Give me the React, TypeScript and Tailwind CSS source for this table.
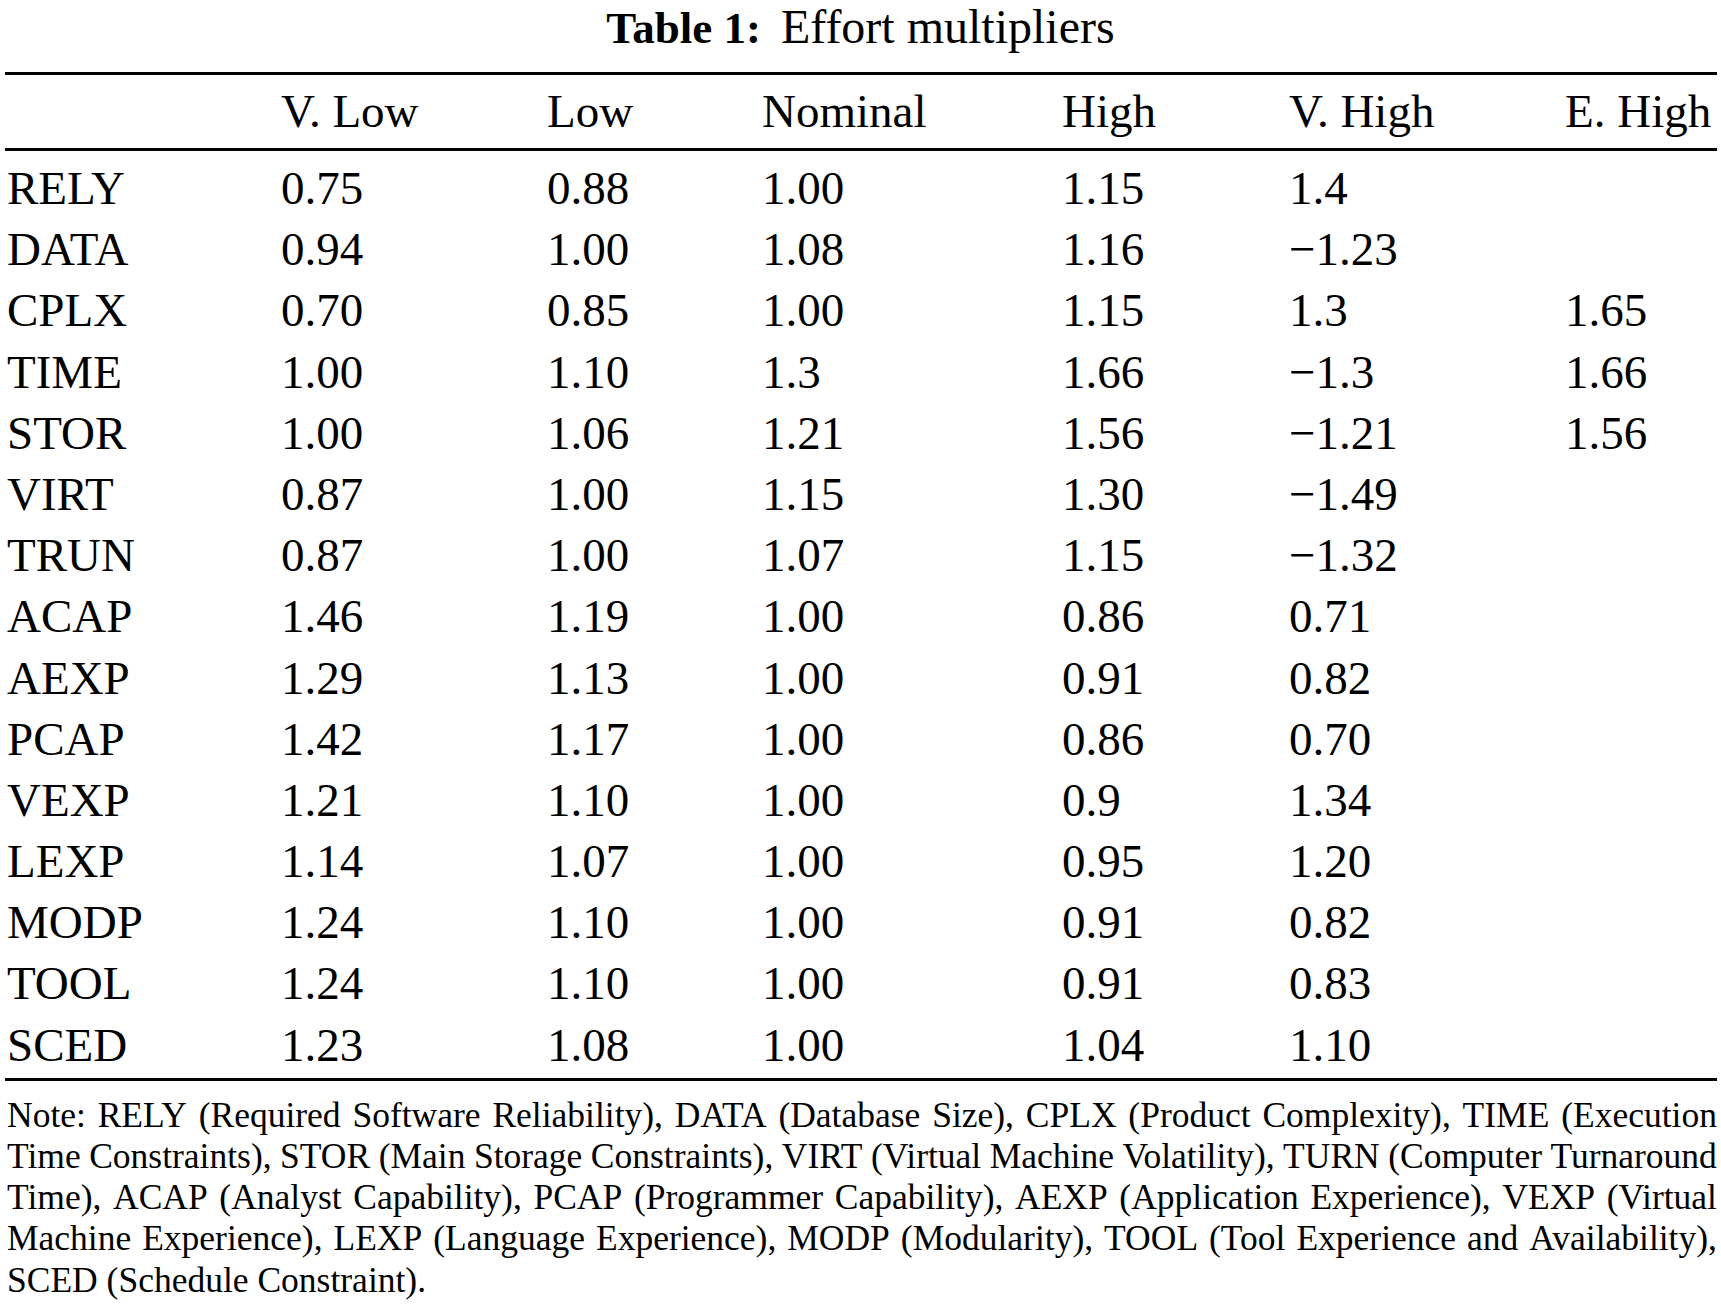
import React from "react";

const header = ["", "V. Low", "Low", "Nominal", "High", "V. High", "E. High"];

const rows: string[][] = [
  ["RELY", "0.75", "0.88", "1.00", "1.15", "1.4", ""],
  ["DATA", "0.94", "1.00", "1.08", "1.16", "\u22121.23", ""],
  ["CPLX", "0.70", "0.85", "1.00", "1.15", "1.3", "1.65"],
  ["TIME", "1.00", "1.10", "1.3", "1.66", "\u22121.3", "1.66"],
  ["STOR", "1.00", "1.06", "1.21", "1.56", "\u22121.21", "1.56"],
  ["VIRT", "0.87", "1.00", "1.15", "1.30", "\u22121.49", ""],
  ["TRUN", "0.87", "1.00", "1.07", "1.15", "\u22121.32", ""],
  ["ACAP", "1.46", "1.19", "1.00", "0.86", "0.71", ""],
  ["AEXP", "1.29", "1.13", "1.00", "0.91", "0.82", ""],
  ["PCAP", "1.42", "1.17", "1.00", "0.86", "0.70", ""],
  ["VEXP", "1.21", "1.10", "1.00", "0.9", "1.34", ""],
  ["LEXP", "1.14", "1.07", "1.00", "0.95", "1.20", ""],
  ["MODP", "1.24", "1.10", "1.00", "0.91", "0.82", ""],
  ["TOOL", "1.24", "1.10", "1.00", "0.91", "0.83", ""],
  ["SCED", "1.23", "1.08", "1.00", "1.04", "1.10", ""],
];

const noteLines = [
  "Note: RELY (Required Software Reliability), DATA (Database Size), CPLX (Product Complexity), TIME (Execution",
  "Time Constraints), STOR (Main Storage Constraints), VIRT (Virtual Machine Volatility), TURN (Computer Turnaround",
  "Time), ACAP (Analyst Capability), PCAP (Programmer Capability), AEXP (Application Experience), VEXP (Virtual",
  "Machine Experience), LEXP (Language Experience), MODP (Modularity), TOOL (Tool Experience and Availability),",
];

const gridCols = "grid grid-cols-[274px_266px_215px_300px_227px_276px_1fr]";

export default function App() {
  return (
    <div
      className="w-[1721px] h-[1304px] bg-white text-black overflow-hidden"
      style={{ fontFamily: '"Liberation Serif", "Times New Roman", serif' }}
    >
      <div className="text-[48px] leading-[53px] text-center whitespace-nowrap">
        <span className="font-bold text-[45px]">Table 1:</span>
        <span className="ml-[20px]">Effort multipliers</span>
      </div>

      <div className="ml-[5px] w-[1712px] mt-[17px]">
        <div className="h-[3px] bg-black" />
        <div className={`${gridCols} h-[73px] leading-[73px] text-[47px] pl-[2px]`}>
          {header.map((h, i) => (
            <div key={i} className="whitespace-nowrap">
              {h}
            </div>
          ))}
        </div>
        <div className="h-[3px] bg-black" />
        <div className="pt-[7px] pb-[2px]">
          {rows.map((r, ri) => (
            <div key={ri} className={`${gridCols} h-[61.2px] leading-[61.2px] text-[47px] pl-[2px]`}>
              {r.map((c, ci) => (
                <div key={ci} className="whitespace-nowrap">
                  {c}
                </div>
              ))}
            </div>
          ))}
        </div>
        <div className="h-[3px] bg-black" />

        <div className="mt-[14px] pl-[2px] text-[35.5px] leading-[41.2px]">
          {noteLines.map((line, li) => (
            <div key={li} className="flex justify-between whitespace-nowrap">
              {line.split(" ").map((w, wi) => (
                <span key={wi}>{w}</span>
              ))}
            </div>
          ))}
          <div className="whitespace-nowrap">SCED (Schedule Constraint).</div>
        </div>
      </div>
    </div>
  );
}
